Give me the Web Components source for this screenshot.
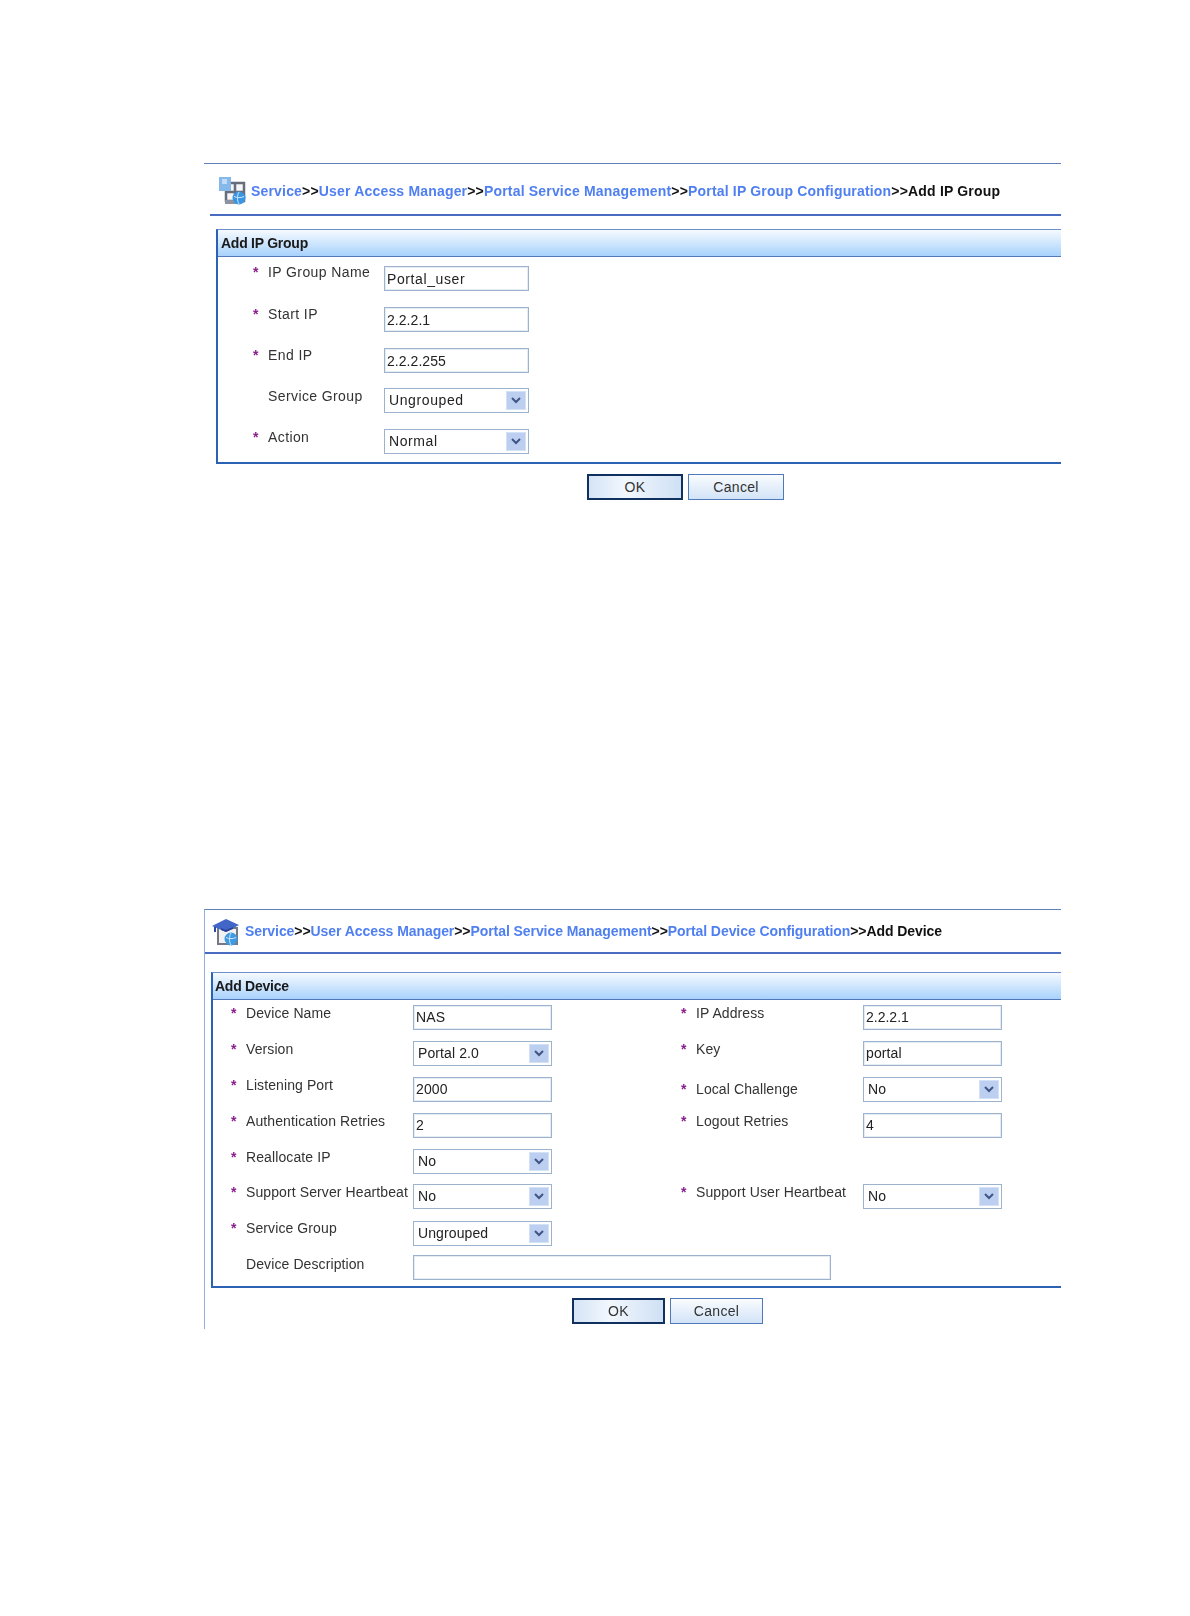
<!DOCTYPE html>
<html>
<head>
<meta charset="utf-8">
<title>Portal configuration</title>
<style>
  html, body { margin: 0; background: #fff; }
  body { font-family: "Liberation Sans", Arial, sans-serif; font-size: 14px; color: #333; }
  #group { --crumb-h: 52px; --crumb-pad: 8px; --crumb-top: 3px; --crumb-ls: 0.18px; --rule-left: 6px; --box-left: 12px; --box-top: 13px; --head-pad: 3px; --star-left: 35px; --star-w: 15px; --label-w: 116px; --label-ls: 0.4px; --ctl-ls: 0.6px; --ctl-top: 3px; --form-top: 9px; --btn-left: 383px; --btn-w: 96px; margin-top: 163px; }
  #device { --crumb-h: 44px; --crumb-pad: 7px; --crumb-top: 0px; --crumb-ls: -0.07px; --rule-left: 0px; --box-left: 6px; --box-top: 18px; --head-pad: 2px; --star-left: 18px; --star-w: 15px; --label-w: 167px; --label-ls: 0.1px; --ctl-ls: 0.1px; --ctl-top: 2px; --form-top: 5px; --btn-left: 367px; --btn-w: 93px; margin-top: 409px; padding-bottom: 5px; border-left: 1px solid #8fb0dc; }
</style>
</head>
<body>

<ui-panel id="group">
  <ui-crumb icon="network" path="Service|User Access Manager|Portal Service Management|Portal IP Group Configuration" current="Add IP Group"></ui-crumb>
  <ui-box heading="Add IP Group">
    <ui-form style="--rows: 41px 41px 40px 41px 25px; --cols: 1fr; --bottom: 8px">
      <ui-field label="IP Group Name" required lift="-2"><ui-input value="Portal_user" width="145"></ui-input></ui-field>
      <ui-field label="Start IP" required lift="-1"><ui-input value="2.2.2.1" width="145" style="--ctl-ls: 0.05px"></ui-input></ui-field>
      <ui-field label="End IP" required lift="-1"><ui-input value="2.2.2.255" width="145" style="--ctl-ls: 0.05px"></ui-input></ui-field>
      <ui-field label="Service Group" lift="0"><ui-select value="Ungrouped" width="145"></ui-select></ui-field>
      <ui-field label="Action" required lift="0"><ui-select value="Normal" width="145"></ui-select></ui-field>
    </ui-form>
  </ui-box>
  <ui-buttons></ui-buttons>
</ui-panel>

<ui-panel id="device">
  <ui-crumb icon="cap" path="Service|User Access Manager|Portal Service Management|Portal Device Configuration" current="Add Device"></ui-crumb>
  <ui-box heading="Add Device">
    <ui-form style="--rows: 36px 36px 36px 36px 35px 37px 34px 25px; --cols: 450px 1fr; --bottom: 6px">
      <ui-field label="Device Name" required lift="0"><ui-input value="NAS" width="139"></ui-input></ui-field>
      <ui-field label="IP Address" required lift="0"><ui-input value="2.2.2.1" width="139" style="--ctl-ls: 0px"></ui-input></ui-field>
      <ui-field label="Version" required lift="0"><ui-select value="Portal 2.0" width="139"></ui-select></ui-field>
      <ui-field label="Key" required lift="0"><ui-input value="portal" width="139"></ui-input></ui-field>
      <ui-field label="Listening Port" required lift="0"><ui-input value="2000" width="139"></ui-input></ui-field>
      <ui-field label="Local Challenge" required lift="4"><ui-select value="No" width="139"></ui-select></ui-field>
      <ui-field label="Authentication Retries" required lift="0"><ui-input value="2" width="139"></ui-input></ui-field>
      <ui-field label="Logout Retries" required lift="0"><ui-input value="4" width="139"></ui-input></ui-field>
      <ui-field label="Reallocate IP" required lift="0"><ui-select value="No" width="139"></ui-select></ui-field>
      <div></div>
      <ui-field label="Support Server Heartbeat" required lift="0"><ui-select value="No" width="139"></ui-select></ui-field>
      <ui-field label="Support User Heartbeat" required lift="0"><ui-select value="No" width="139"></ui-select></ui-field>
      <ui-field label="Service Group" required lift="-1"><ui-select value="Ungrouped" width="139"></ui-select></ui-field>
      <div></div>
      <ui-field label="Device Description" lift="1" style="grid-column: 1 / -1"><ui-input value="" width="418"></ui-input></ui-field>
    </ui-form>
  </ui-box>
  <ui-buttons></ui-buttons>
</ui-panel>

<script>
const ICONS = {
  network: `
    <rect x="8" y="7" width="18" height="18" fill="#f4f6f8" stroke="#676d7a" stroke-width="2.500"/>
    <path d="M17 7v18M8 16h18" stroke="#676d7a" stroke-width="2.500"/>
    <rect x="1" y="1" width="12" height="14" fill="#86b8ea"/>
    <rect x="4" y="3" width="5" height="5" fill="#c0dcf6"/>
    <rect x="7" y="24" width="13" height="4" fill="#8d93a0"/>
    <circle cx="21" cy="22" r="6.500" fill="#3a96e2"/>
    <path d="M16 20.500c3 1.500 7 1.500 10 0M21 16c-2 3-2 9 0 12" stroke="#cfe8fb" fill="none"/>`,
  cap: `
    <rect x="6" y="11" width="19" height="16" fill="#f0f2f4" stroke="#737985" stroke-width="2"/>
    <path d="M0 9 14 2l13 6-13 7z" fill="#4166c8"/>
    <path d="M3 10v5" stroke="#2c4aa0" stroke-width="2"/>
    <path d="M9 13l5 2 7-3v-2l-7 3-5-2z" fill="#2b4296"/>
    <circle cx="19" cy="22" r="6.500" fill="#3f9ae0"/>
    <path d="M14 20.500c3 1.500 7 1.500 10 0M19 16c-2 3-2 9 0 12" stroke="#cfe8fb" fill="none"/>`
};

class UiPanel extends HTMLElement {
  constructor() {
    super();
    this.attachShadow({ mode: "open" });
    this.shadowRoot.innerHTML = `
      <style>
        :host { display: block; box-sizing: border-box; width: 857px; margin-left: 204px; border-top: 1px solid #5d81b8; filter: blur(0.4px); }
      </style>
      <slot></slot>`;
  }
}

class UiCrumb extends HTMLElement {
  constructor() {
    super();
    this.attachShadow({ mode: "open" });
    const links = this.getAttribute("path").split("|")
      .map((p) => `<a>${p}</a>&gt;&gt;`).join("");
    this.shadowRoot.innerHTML = `
      <style>
        :host { display: flex; align-items: center; box-sizing: border-box; height: var(--crumb-h); padding: var(--crumb-top) 0 0 var(--crumb-pad); margin-left: var(--rule-left); border-bottom: 2px solid #4a6cc0; font: bold 14px "Liberation Sans", Arial, sans-serif; letter-spacing: var(--crumb-ls); color: #111; white-space: nowrap; }
        svg { width: 28px; height: 29px; flex: none; margin-right: 5px; }
        a { color: #4f7ff0; }
      </style>
      <svg viewBox="0 0 28 29">${ICONS[this.getAttribute("icon")]}</svg>
      <span>${links}${this.getAttribute("current")}</span>`;
  }
}

class UiBox extends HTMLElement {
  constructor() {
    super();
    this.attachShadow({ mode: "open" });
    this.shadowRoot.innerHTML = `
      <style>
        :host { display: block; margin: var(--box-top) 0 0 var(--box-left); border: solid #2c62b4; border-width: 1px 0 2px 2px; border-top-color: #6f90cc; }
        header { height: 27px; box-sizing: border-box; padding-left: var(--head-pad); border-bottom: 1px solid #5578bc; background: linear-gradient(#f6faff, #a8d2fc); font: bold 14px/26px "Liberation Sans", Arial, sans-serif; letter-spacing: -0.25px; color: #1a1a1a; }
      </style>
      <header>${this.getAttribute("heading")}</header>
      <slot></slot>`;
  }
}

class UiForm extends HTMLElement {
  constructor() {
    super();
    this.attachShadow({ mode: "open" });
    this.shadowRoot.innerHTML = `
      <style>
        :host { display: grid; grid-template-columns: var(--cols); grid-template-rows: var(--rows); padding: var(--form-top) 0 var(--bottom) var(--star-left); }
      </style>
      <slot></slot>`;
  }
}

class UiField extends HTMLElement {
  constructor() {
    super();
    this.attachShadow({ mode: "open" });
    const star = this.hasAttribute("required") ? "*" : "";
    const lift = this.getAttribute("lift");
    this.shadowRoot.innerHTML = `
      <style>
        :host { display: flex; align-items: flex-start; font: 14px/16px "Liberation Sans", Arial, sans-serif; color: #333; }
        .star { width: var(--star-w); flex: none; color: #8a1f8f; font-weight: bold; }
        .label { width: var(--label-w); flex: none; white-space: nowrap; letter-spacing: var(--label-ls); }
      </style>
      <span class="star" style="margin-top:${lift}px">${star}</span>
      <span class="label" style="margin-top:${lift}px">${this.getAttribute("label")}</span>
      <slot></slot>`;
  }
}

class UiInput extends HTMLElement {
  constructor() {
    super();
    this.attachShadow({ mode: "open" });
    this.shadowRoot.innerHTML = `
      <style>
        :host { display: block; box-sizing: border-box; height: 25px; width: ${this.getAttribute("width")}px; border: 1px solid #9db2cc; box-shadow: inset 0 0 0 1px #e6ecf3; padding: var(--ctl-top) 2px 0; font: 14px/18px "Liberation Sans", Arial, sans-serif; color: #222; letter-spacing: var(--ctl-ls); }
      </style>
      ${this.getAttribute("value")}`;
  }
}

class UiSelect extends HTMLElement {
  constructor() {
    super();
    this.attachShadow({ mode: "open" });
    this.shadowRoot.innerHTML = `
      <style>
        :host { display: flex; box-sizing: border-box; height: 25px; width: ${this.getAttribute("width")}px; border: 1px solid #9db2cc; padding: 2px 2px 2px 4px; justify-content: space-between; font: 14px/19px "Liberation Sans", Arial, sans-serif; color: #222; letter-spacing: var(--ctl-ls); }
        .arrow { width: 20px; background: #bccff0; border: 1px solid #d3e0f5; box-sizing: border-box; display: flex; align-items: center; justify-content: center; }
      </style>
      <span>${this.getAttribute("value")}</span>
      <span class="arrow"><svg width="10" height="7" viewBox="0 0 10 7"><path d="M1 1l4 4 4-4" fill="none" stroke="#3f5585" stroke-width="2"/></svg></span>`;
  }
}

class UiButton extends HTMLElement {
  constructor() {
    super();
    this.attachShadow({ mode: "open" });
    this.shadowRoot.innerHTML = `
      <style>
        :host { display: flex; align-items: center; justify-content: center; box-sizing: border-box; width: var(--btn-w); height: 26px; border: 1px solid #4f79b8; background: linear-gradient(#fafcff, #d2e3f7); font: 14px "Liberation Sans", Arial, sans-serif; color: #333; letter-spacing: 0.3px; }
        :host([primary]) { border: 2px solid #10305f; background: linear-gradient(90deg, #d5e4f6, #f2f7fd 40%, #cfe0f5); }
      </style>
      <slot></slot>`;
  }
}

class UiButtons extends HTMLElement {
  constructor() {
    super();
    this.attachShadow({ mode: "open" });
    this.shadowRoot.innerHTML = `
      <style>
        :host { display: flex; gap: 5px; margin-top: 10px; padding-left: var(--btn-left); }
      </style>
      <ui-button primary>OK</ui-button>
      <ui-button>Cancel</ui-button>`;
  }
}

customElements.define("ui-panel", UiPanel);
customElements.define("ui-crumb", UiCrumb);
customElements.define("ui-box", UiBox);
customElements.define("ui-form", UiForm);
customElements.define("ui-field", UiField);
customElements.define("ui-input", UiInput);
customElements.define("ui-select", UiSelect);
customElements.define("ui-button", UiButton);
customElements.define("ui-buttons", UiButtons);
</script>
</body>
</html>
